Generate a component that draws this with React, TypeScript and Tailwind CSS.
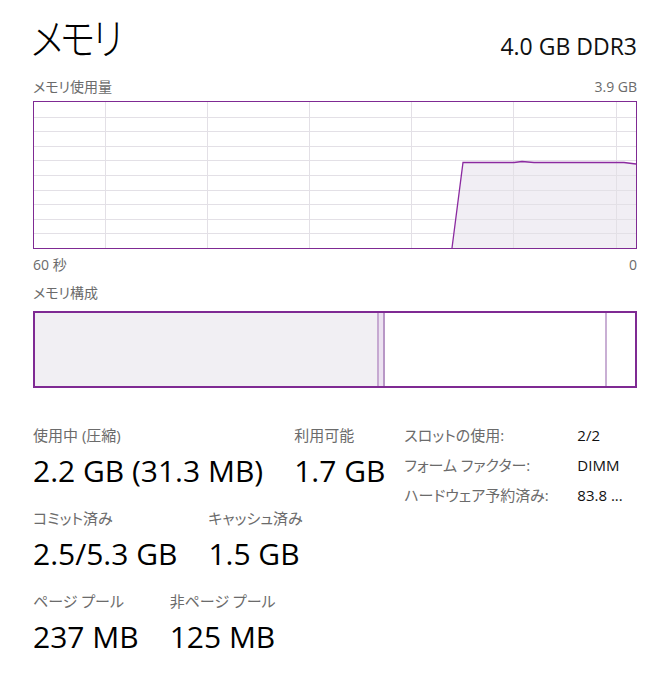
const font = "font-['Open_Sans','Noto_Sans_CJK_JP',sans-serif] [font-feature-settings:'palt']";

function UsageGraph() {
  const vLines = [71, 173, 275, 377, 479, 582];
  const hLines = [1, 2, 3, 4, 5, 6, 7, 8, 9].map((i) => Math.round(i * 14.6) + 0.5);
  return (
    <div className="mt-[4px] h-[148px] border border-[#7f2a93]">
      <svg width="602" height="146" viewBox="0 0 602 146" className="block">
        <path
          d="M418 146 L429 60.5 L480 60.5 L488 59.5 L500 60.5 L590 60.5 L602 62 L602 146 Z"
          fill="#f1eef4"
        />
        {hLines.map((y) => (
          <line key={y} x1="0" x2="602" y1={y} y2={y} stroke="#e3e0e6" strokeWidth="1" />
        ))}
        {vLines.map((x) => (
          <line key={x} x1={x + 0.5} x2={x + 0.5} y1="0" y2="146" stroke="#e3e0e6" strokeWidth="1" />
        ))}
        <polyline
          points="418,146 429,60.5 480,60.5 488,59.5 500,60.5 590,60.5 602,62"
          fill="none"
          stroke="#8b2aa0"
          strokeWidth="1.3"
        />
      </svg>
    </div>
  );
}

function CompositionBar() {
  return (
    <div className="mt-[8px] flex h-[77px] border-2 border-[#7f2a93]">
      <div className="w-[344px] border-r-2 border-[#c6a9d1] bg-[#f1eff3]" />
      <div className="w-[6px] border-r-2 border-[#b897c6] bg-[#ece2f1]" />
      <div className="w-[222px] border-r-2 border-[#c9afd4] bg-white" />
      <div className="flex-1 bg-white" />
    </div>
  );
}

function Stat({ label, value }: { label: string; value: string }) {
  return (
    <div className="flex flex-col">
      <span className="text-[15px] leading-[20px] text-[#6b6b6b] whitespace-nowrap">{label}</span>
      <span className="mt-[8px] text-[30px] leading-[36px] text-black whitespace-nowrap">{value}</span>
    </div>
  );
}

export default function App() {
  const rows = [
    [
      { label: "使用中 (圧縮)", value: "2.2 GB (31.3 MB)" },
      { label: "利用可能", value: "1.7 GB" },
    ],
    [
      { label: "コミット済み", value: "2.5/5.3 GB" },
      { label: "キャッシュ済み", value: "1.5 GB" },
    ],
    [
      { label: "ページ プール", value: "237 MB" },
      { label: "非ページ プール", value: "125 MB" },
    ],
  ];
  const specs = [
    ["スロットの使用:", "2/2"],
    ["フォーム ファクター:", "DIMM"],
    ["ハードウェア予約済み:", "83.8 ..."],
  ];

  return (
    <div className={`w-[664px] h-[692px] overflow-hidden bg-white pl-[33px] pr-[27px] ${font}`}>
      {/* header */}
      <div className="flex h-[77px] items-baseline justify-between pt-[13px]">
        <h1 className="-ml-[2px] inline-block origin-left scale-x-[0.85] text-[43px] font-light leading-[52px] tracking-[-3px] text-black">
          メモリ
        </h1>
        <span className="text-[23px] leading-[30px] text-[#111]">4.0 GB DDR3</span>
      </div>

      <div className="flex justify-between text-[14px] leading-[20px] text-[#6b6b6b]">
        <span>メモリ使用量</span>
        <span>3.9 GB</span>
      </div>
      <UsageGraph />
      <div className="mt-[6px] flex justify-between text-[14px] leading-[20px] text-[#6b6b6b]">
        <span>60 秒</span>
        <span>0</span>
      </div>

      <div className="mt-[8px] text-[14px] leading-[20px] text-[#6b6b6b]">メモリ構成</div>
      <CompositionBar />

      {/* stats */}
      <div className="mt-[37px] flex items-start">
        <div className="flex flex-col gap-[19px]">
          {rows.map((row, i) => (
            <div key={i} className="flex gap-[31px]">
              {row.map((s) => (
                <Stat key={s.label} label={s.label} value={s.value} />
              ))}
            </div>
          ))}
        </div>
        <div className="ml-[19px] grid grid-cols-[173px_auto] gap-y-[10px] text-[15px] leading-[20px]">
          {specs.map(([k, v]) => (
            <div key={k} className="contents">
              <span className="text-[#6b6b6b] whitespace-nowrap">{k}</span>
              <span className="text-[#111] whitespace-nowrap">{v}</span>
            </div>
          ))}
        </div>
      </div>
    </div>
  );
}
